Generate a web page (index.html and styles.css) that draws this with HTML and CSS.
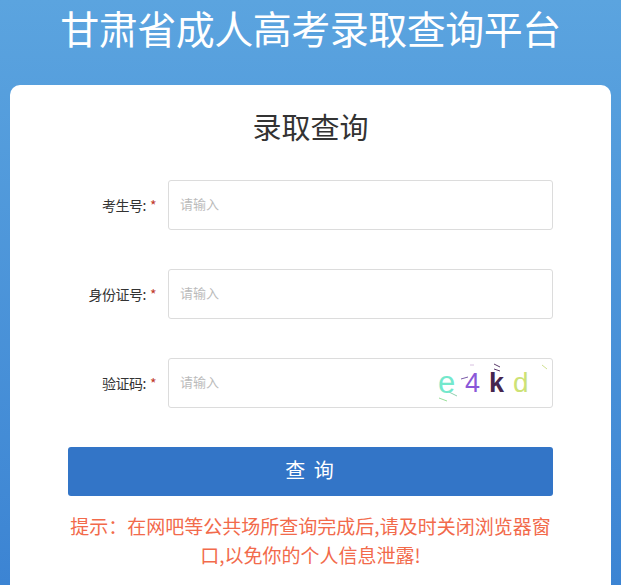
FILE: index.html
```html
<!DOCTYPE html>
<html lang="zh-CN">
<head>
    <meta charset="UTF-8">
    <meta name="viewport" content="width=device-width, initial-scale=1.0">
    <title>甘肃省成人高考录取查询平台</title>
    <link rel="stylesheet" href="styles.css">
</head>
<body>

    <h1 class="site-title">甘肃省成人高考录取查询平台</h1>

    <div class="card">
        <h2 class="card-title">录取查询</h2>

        <form class="query-form">
            <div class="form-row">
                <label class="form-label">考生号:<span class="req">*</span></label>
                <input type="text" class="form-input" placeholder="请输入">
            </div>

            <div class="form-row">
                <label class="form-label">身份证号:<span class="req">*</span></label>
                <input type="text" class="form-input" placeholder="请输入">
            </div>

            <div class="form-row">
                <label class="form-label">验证码:<span class="req">*</span></label>
                <div class="input-wrap">
                    <input type="text" class="form-input" placeholder="请输入">
                    <!-- captcha picture -->
                    <svg class="captcha" width="112" height="42" viewBox="0 0 112 42">
                        <rect width="112" height="42" fill="#fff"/>
                        <line x1="2" y1="36" x2="10" y2="39" stroke="#9adf9a" stroke-width="1"/>
                        <line x1="12" y1="30" x2="20" y2="34" stroke="#8fd0b0" stroke-width="1"/>
                        <line x1="24" y1="17" x2="31" y2="15" stroke="#7a5aa8" stroke-width="1"/>
                        <line x1="33" y1="3" x2="37" y2="3" stroke="#d8c0e0" stroke-width="1"/>
                        <line x1="57" y1="2" x2="63" y2="5" stroke="#5a3a6a" stroke-width="1"/>
                        <line x1="57" y1="7" x2="63" y2="9" stroke="#5a3a6a" stroke-width="1"/>
                        <line x1="105" y1="3" x2="110" y2="7" stroke="#d0e090" stroke-width="1"/>
                        <text x="1" y="31" class="cap-e">e</text>
                        <text x="28" y="30" class="cap-4">4</text>
                        <text x="52" y="30" class="cap-k">k</text>
                        <text x="76" y="30" class="cap-d">d</text>
                    </svg>
                </div>
            </div>

            <button type="submit" class="btn-query">查 询</button>
        </form>

        <p class="notice">提示：在网吧等公共场所查询完成后,请及时关闭浏览器窗口,以免你的个人信息泄露!</p>
    </div>

</body>
</html>
```

FILE: styles.css
```css
body {
    margin: 0;
    height: 585px;
    overflow: hidden;
    background: linear-gradient(to bottom, #5ba4df, #3c84d3);
    font-family: 'Noto Sans CJK SC', 'Liberation Sans', sans-serif;
    color: #333;
}

.site-title {
    margin: 0;
    height: 85px;
    box-sizing: border-box;
    font-size: 39px;
    font-weight: normal;
    line-height: 54px;
    color: #fff;
    text-align: center;
    letter-spacing: -0.5px;
}

.card {
    margin: 0 10px;
    background-color: #fff;
    border-radius: 10px 10px 0 0;
    padding: 20px 58px 0;
    height: 500px;
    box-sizing: border-box;
}

.card-title {
    margin: 0 0 33px;
    font-size: 29px;
    font-weight: normal;
    line-height: 42px;
    text-align: center;
    color: #333;
}

.query-form {
    display: flex;
    flex-direction: column;
    gap: 39px;
}

.form-row {
    display: flex;
    align-items: center;
}

.form-label {
    width: 100px;
    padding-right: 12px;
    box-sizing: border-box;
    text-align: right;
    font-size: 14px;
    color: #333;
    letter-spacing: -0.5px;
}

.req {
    color: #c0392b;
    margin-left: 4px;
}

.input-wrap {
    position: relative;
    flex: 1;
    display: flex;
}

.form-input {
    flex: 1;
    height: 50px;
    box-sizing: border-box;
    border: 1px solid #dcdcdc;
    border-radius: 3px;
    padding: 0 11px 4px;
    font-size: 13px;
    font-family: inherit;
    color: #333;
    outline: none;
}

.form-input::placeholder {
    color: #bbb;
}

.captcha {
    position: absolute;
    right: 4px;
    top: 4px;
}

.captcha text {
    font-family: 'Liberation Sans', sans-serif;
}

.cap-e { fill: #74e8cc; font-size: 31px; }
.cap-4 { fill: #8a58d8; font-size: 27px; }
.cap-k { fill: #45264f; font-size: 27px; font-weight: bold; }
.cap-d { fill: #cde276; font-size: 28px; }

.btn-query {
    height: 49px;
    padding-bottom: 5px;
    border: none;
    border-radius: 3px;
    background-color: #3375c7;
    color: #fff;
    font-size: 20px;
    font-family: inherit;
    letter-spacing: 2px;
    cursor: pointer;
}

.notice {
    margin: 15px 0 0;
    font-size: 19px;
    line-height: 29px;
    color: #f26a4b;
    text-align: center;
}
```
